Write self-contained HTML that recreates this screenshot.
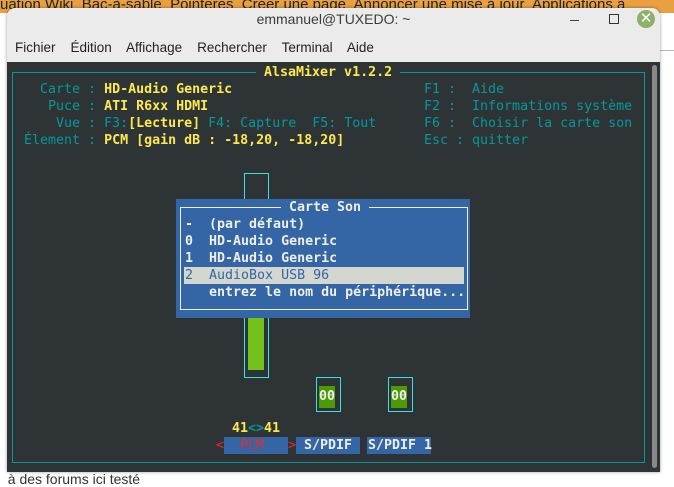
<!DOCTYPE html>
<html><head><meta charset="utf-8"><style>
*{margin:0;padding:0;box-sizing:border-box}
body{width:674px;height:479px;overflow:hidden;background:#fff;position:relative;font-family:"Liberation Sans",sans-serif}
.a{position:absolute}
.m{position:absolute;font-family:"DejaVu Sans Mono","Liberation Mono",monospace;font-size:13.3px;line-height:17px;white-space:pre}
.c{color:#06989a}.y{color:#fce94f;font-weight:bold}.w{color:#eeeeec;font-weight:bold}
</style></head><body>
<div class="a" style="left:0;top:0;width:674px;height:13px;background:#e8a040"></div>
<div class="a" style="left:0;top:-4px;font-size:15px;color:#222;white-space:pre">uation Wiki  Bac-à-sable  Pointeres  Créer une page  Annoncer une mise à jour  Applications à</div>
<div class="a" style="left:0;top:471px;font-size:14px;color:#333;white-space:pre">  à des forums ici testé</div>
<div class="a" style="left:660px;top:50px;width:14px;height:1px;background:#bbb"></div>
<!-- window -->
<div class="a" style="left:7px;top:8px;width:653px;height:464px;background:#ebebeb;border-radius:8px 8px 0 0;box-shadow:0 0 3px rgba(0,0,0,.4)"></div>
<div class="a" style="left:7px;top:11px;width:653px;text-align:center;font-size:14px;color:#3c3c3c">emmanuel@TUXEDO: ~</div>
<div class="a" style="left:570px;top:20px;width:9px;height:1px;background:#444"></div>
<div class="a" style="left:609px;top:14px;width:10px;height:10px;border:1.3px solid #333"></div>
<div class="a" style="left:637px;top:10px;width:18px;height:18px;border-radius:50%;background:#8fb06b;color:#fff;font-size:15px;line-height:18px;text-align:center">✕</div>
<div class="a" style="left:15px;top:40px;font-size:13.5px;color:#222;white-space:pre">Fichier    Édition    Affichage    Rechercher    Terminal    Aide</div>
<div class="a" style="left:7px;top:62px;width:653px;height:410px;background:#2e3436"></div>
<div class="a" style="left:652px;top:65px;width:5px;height:403px;background:#888;border-radius:3px"></div>
<div class="a" style="left:12px;top:72px;width:633px;height:391px;border:1px solid #06989a"></div>
<div class="m y" style="left:256px;top:64px;background:#2e3436"> AlsaMixer v1.2.2 </div>
<div class="m" style="left:24px;top:81px"><span class="c">  Carte : </span><span class="y">HD-Audio Generic</span>
<span class="c">   Puce : </span><span class="y">ATI R6xx HDMI</span>
<span class="c">    Vue : F3:</span><span class="y">[Lecture]</span><span class="c"> F4: Capture  F5: Tout</span>
<span class="c">Élement : </span><span class="y">PCM [gain dB : -18,20, -18,20]</span></div>
<div class="m c" style="left:424px;top:81px">F1 :  Aide
F2 :  Informations système
F6 :  Choisir la carte son
Esc : quitter</div>
<!-- mixer -->
<div class="a" style="left:244px;top:173px;width:25px;height:205px;border:1px solid #34e2e2"></div>
<div class="a" style="left:248px;top:317px;width:16px;height:53px;background:#73c11a"></div>
<div class="a" style="left:316px;top:377px;width:25px;height:35px;border:1px solid #34e2e2"></div>
<div class="a" style="left:388px;top:377px;width:25px;height:35px;border:1px solid #34e2e2"></div>
<div class="m w" style="left:319px;top:386px;background:#4e9a06;line-height:22px">00</div>
<div class="m w" style="left:391px;top:386px;background:#4e9a06;line-height:22px">00</div>
<div class="m" style="left:232px;top:420px"><span class="y">41</span><span class="c" style="font-weight:bold">&lt;&gt;</span><span class="y">41</span></div>
<div class="a" style="left:224px;top:437px;width:64px;height:17px;background:#3465a4"></div>
<div class="a" style="left:296px;top:437px;width:64px;height:17px;background:#3465a4"></div>
<div class="a" style="left:367px;top:437px;width:64px;height:17px;background:#3465a4"></div>
<div class="m" style="left:216px;top:437px;color:#ef2929">&lt;  PCM   &gt;</div>
<div class="m w" style="left:304px;top:437px">S/PDIF</div>
<div class="m w" style="left:368px;top:437px">S/PDIF 1</div>
<!-- dialog -->
<div class="a" style="left:176px;top:199px;width:294px;height:119px;background:#3465a4"></div>
<div class="a" style="left:180px;top:207px;width:288px;height:103px;border:1px solid #eeeeec"></div>
<div class="m w" style="left:281px;top:199px;background:#3465a4"> Carte Son </div>
<div class="a" style="left:184px;top:267px;width:280px;height:17px;background:#d3d7cf"></div>
<div class="m w" style="left:185px;top:216px">-  (par défaut)
0  HD-Audio Generic
1  HD-Audio Generic
<span style="color:#3465a4;font-weight:normal">2  AudioBox USB 96</span>
   entrez le nom du périphérique...</div>
</body></html>
